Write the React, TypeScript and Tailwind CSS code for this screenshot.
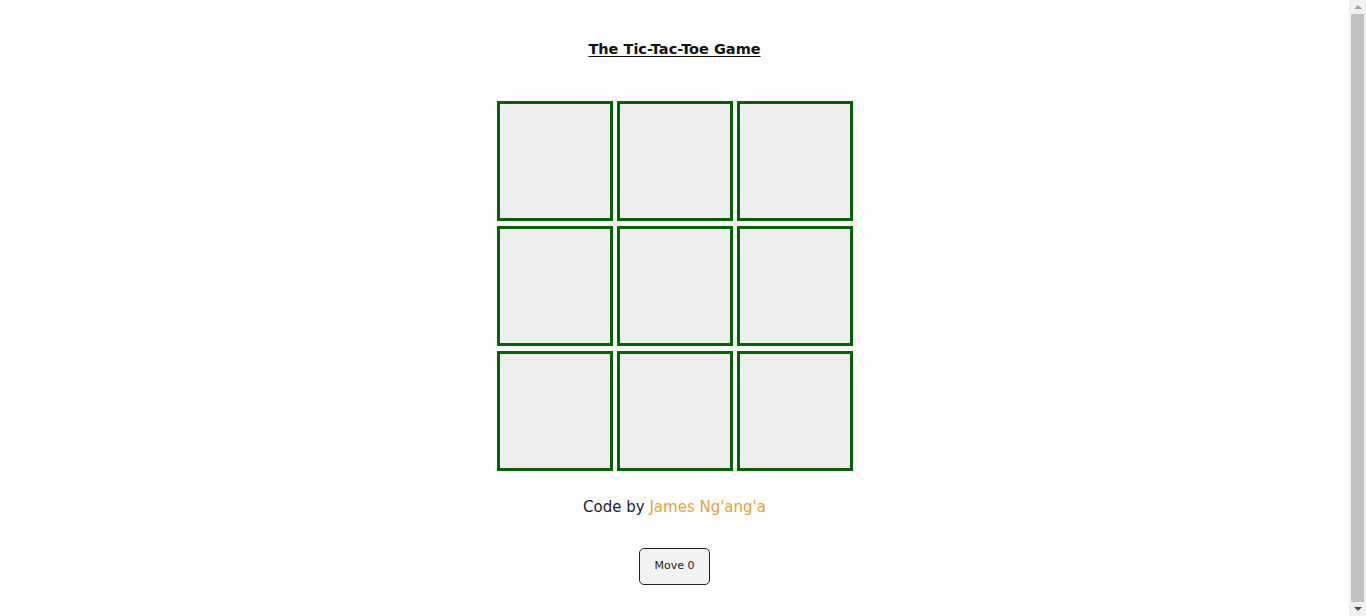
export default function App() {
  const cells = Array.from({ length: 9 });
  return (
    <div className="flex h-screen bg-white font-['DejaVu_Sans',sans-serif] text-[#111]">
      <main className="flex flex-1 flex-col items-center pt-[39px]">
        <h1 className="text-[14.5px] font-bold underline underline-offset-2 leading-[20px]">
          The Tic-Tac-Toe Game
        </h1>
        <div className="mt-[42px] grid grid-cols-[116px_116px_116px] gap-x-[4px] gap-y-[5px]">
          {cells.map((_, i) => (
            <button
              key={i}
              className="h-[120px] w-[116px] border-[3px] border-[#006400] bg-[#efefef]"
            />
          ))}
        </div>
        <p className="mt-[25px] text-[15px] leading-[22px] text-[#1a1a33]">
          Code by <span className="text-[#e0a43c]">James Ng'ang'a</span>
        </p>
        <button className="mt-[30px] h-[37px] w-[71px] rounded-[5px] border border-[#222] bg-[#f3f3f3] text-[11px] text-[#222]">
          Move 0
        </button>
      </main>
      {/* scrollbar */}
      <div className="flex w-[17px] flex-col items-center bg-[#f1f1f1]">
        <div className="flex h-[14px] items-center justify-center">
          <div className="h-0 w-0 border-x-[4px] border-b-[4px] border-x-transparent border-b-[#a3a3a3]" />
        </div>
        <div className="w-[13px] flex-1 bg-[#c1c1c1]" />
        <div className="flex h-[14px] items-center justify-center">
          <div className="h-0 w-0 border-x-[4px] border-t-[4px] border-x-transparent border-t-[#505050]" />
        </div>
      </div>
    </div>
  );
}
